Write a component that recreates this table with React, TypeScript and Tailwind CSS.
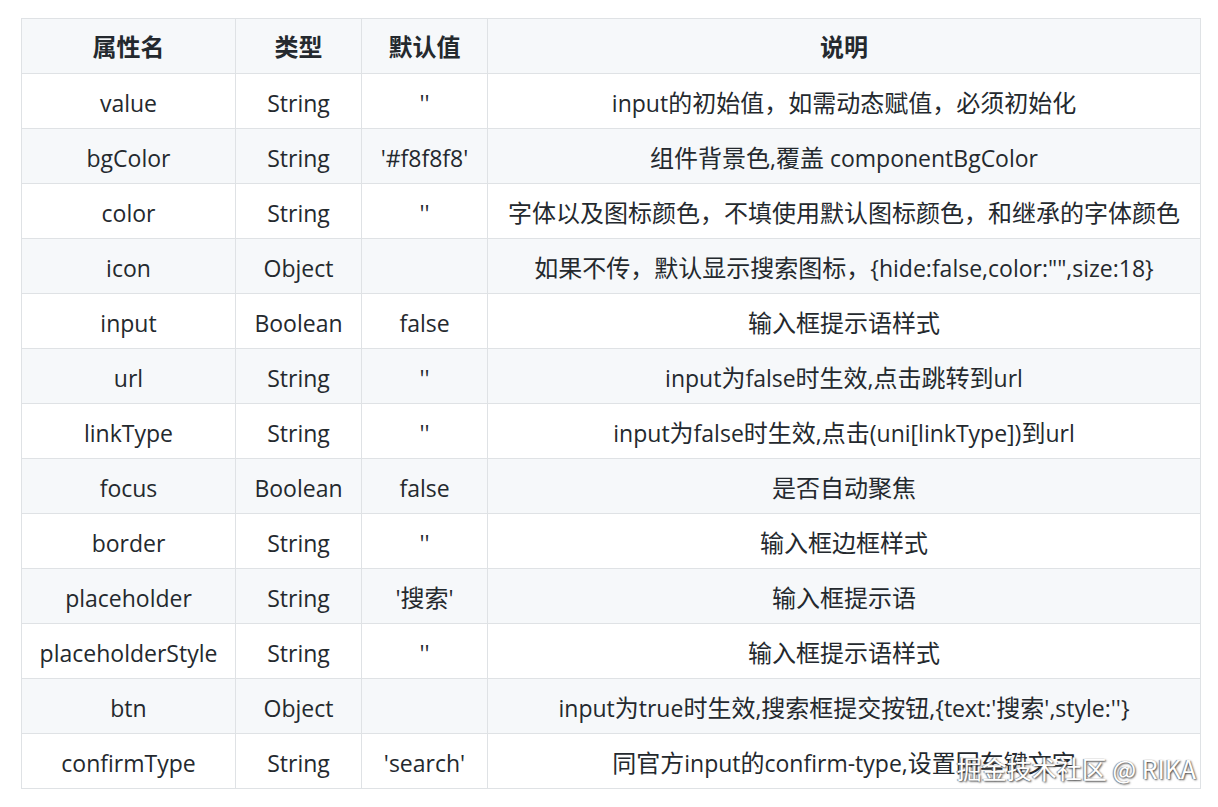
import React from "react";

const rows: [string, string, string, string][] = [
  ["value", "String", "''", "input的初始值，如需动态赋值，必须初始化"],
  ["bgColor", "String", "'#f8f8f8'", "组件背景色,覆盖 componentBgColor"],
  ["color", "String", "''", "字体以及图标颜色，不填使用默认图标颜色，和继承的字体颜色"],
  ["icon", "Object", "", "如果不传，默认显示搜索图标，{hide:false,color:\"\",size:18}"],
  ["input", "Boolean", "false", "输入框提示语样式"],
  ["url", "String", "''", "input为false时生效,点击跳转到url"],
  ["linkType", "String", "''", "input为false时生效,点击(uni[linkType])到url"],
  ["focus", "Boolean", "false", "是否自动聚焦"],
  ["border", "String", "''", "输入框边框样式"],
  ["placeholder", "String", "'搜索'", "输入框提示语"],
  ["placeholderStyle", "String", "''", "输入框提示语样式"],
  ["btn", "Object", "", "input为true时生效,搜索框提交按钮,{text:'搜索',style:''}"],
  ["confirmType", "String", "'search'", "同官方input的confirm-type,设置回车键文字"],
];

function Mixed({ text }: { text: string }) {
  const parts = text.split(/([\u3000-\u303f\u4e00-\u9fff\uff00-\uffef]+)/);
  return (
    <>
      {parts.map((p, i) =>
        p === "" ? null : /[\u3000-\u303f\u4e00-\u9fff\uff00-\uffef]/.test(p) ? (
          <span key={i} className="text-[24px]">
            {p}
          </span>
        ) : (
          <span key={i}>{p}</span>
        )
      )}
    </>
  );
}

export default function App() {
  return (
    <div
      className="relative w-[1218px] h-[807px] bg-white overflow-hidden text-[#24292e]"
      style={{ fontFamily: '"Open Sans", "Noto Sans CJK SC", sans-serif' }}
    >
      <div className="pt-[18px] pl-[21px]">
        <table className="table-fixed border-collapse w-[1179px] text-[23px]">
          <colgroup>
            <col className="w-[214px]" />
            <col className="w-[126px]" />
            <col className="w-[126px]" />
            <col className="w-[713px]" />
          </colgroup>
          <thead>
            <tr className="bg-[#f6f8fa] h-[55px]">
              {["属性名", "类型", "默认值", "说明"].map((h) => (
                <th
                  key={h}
                  className="border border-[#dfe2e5] font-bold text-center p-0 text-[24px]"
                  style={{ fontFamily: '"Noto Sans CJK SC", sans-serif' }}
                >
                  {h}
                </th>
              ))}
            </tr>
          </thead>
          <tbody>
            {rows.map((r, i) => (
              <tr key={r[0]} className={i % 2 === 1 ? "bg-[#f6f8fa] h-[55px]" : "bg-white h-[55px]"}>
                {r.map((c, j) => (
                  <td
                    key={j}
                    className="border border-[#dfe2e5] text-center p-0 pt-[3px] whitespace-nowrap leading-[36px]"
                  >
                    <Mixed text={c} />
                  </td>
                ))}
              </tr>
            ))}
          </tbody>
        </table>
      </div>
      <div
        className="absolute right-[22px] bottom-[20px] text-[25px] text-white"
        style={{
          fontFamily: '"Noto Sans CJK SC", sans-serif',
          textShadow: "1px 1px 2px #444, -1px 0 1px #888",
        }}
      >
        掘金技术社区 @ RIKA
      </div>
    </div>
  );
}
